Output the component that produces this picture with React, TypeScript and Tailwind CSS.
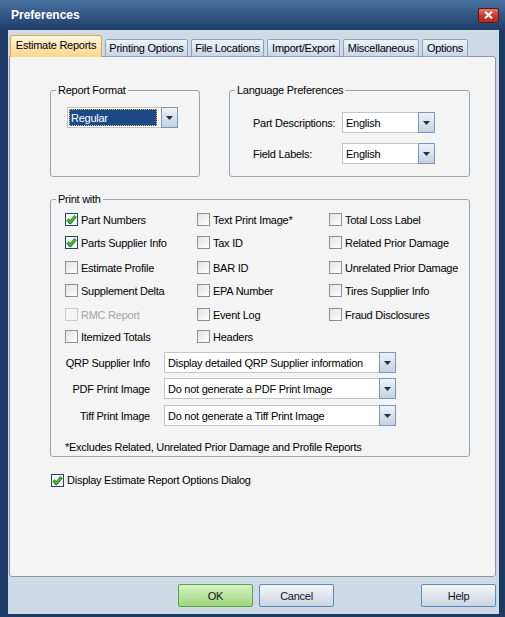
import clsx from 'clsx'

const tabs = [
  { label: 'Estimate Reports', w: 'w-[92px]', active: true },
  { label: 'Printing Options', w: 'w-[83px]' },
  { label: 'File Locations', w: 'w-[73px]' },
  { label: 'Import/Export', w: 'w-[73px]' },
  { label: 'Miscellaneous', w: 'w-[76px]' },
  { label: 'Options', w: 'w-[46px]' },
]

type Box = { label: string; checked?: boolean; disabled?: boolean } | null

// rows of the "Print with" grid, three columns each
const rows: { h: string; cells: Box[] }[] = [
  { h: 'h-[23px]', cells: [{ label: 'Part Numbers', checked: true }, { label: 'Text Print Image*' }, { label: 'Total Loss Label' }] },
  { h: 'h-[25px]', cells: [{ label: 'Parts Supplier Info', checked: true }, { label: 'Tax ID' }, { label: 'Related Prior Damage' }] },
  { h: 'h-[23px]', cells: [{ label: 'Estimate Profile' }, { label: 'BAR ID' }, { label: 'Unrelated Prior Damage' }] },
  { h: 'h-[24px]', cells: [{ label: 'Supplement Delta' }, { label: 'EPA Number' }, { label: 'Tires Supplier Info' }] },
  { h: 'h-[22px]', cells: [{ label: 'RMC Report', disabled: true }, { label: 'Event Log' }, { label: 'Fraud Disclosures' }] },
  { h: 'h-[13px]', cells: [{ label: 'Itemized Totals' }, { label: 'Headers' }, null] },
]

function CheckBox({ checked, disabled }: { checked?: boolean; disabled?: boolean }) {
  return (
    <span
      className={clsx(
        'w-[13px] h-[13px] border flex items-center justify-center shrink-0',
        disabled
          ? 'border-[#cacaca] bg-[#f4f4f4]'
          : checked
            ? 'border-[#1f4270] bg-white'
            : 'border-[#8e8f8f] bg-linear-to-br from-[#e2e2e2] to-white',
      )}
    >
      {checked && (
        <svg width="11" height="11" viewBox="0 0 11 11">
          <path d="M1.6 5.4 L4.3 8.6 L9.6 1.9" fill="none" stroke="#1f7a1c" strokeWidth="3.2" strokeLinejoin="round" />
          <path d="M1.9 5.5 L4.3 8.2 L9.3 2.1" fill="none" stroke="#47bd36" strokeWidth="1.7" strokeLinejoin="round" />
        </svg>
      )}
    </span>
  )
}

function Arrow() {
  return (
    <svg width="7" height="4" viewBox="0 0 7 4">
      <polygon points="0,0 7,0 3.5,4" fill="#17345f" />
    </svg>
  )
}

function Select({ value, w, focused }: { value: string; w: string; focused?: boolean }) {
  return (
    <div className={clsx('flex h-[21px] bg-white border border-[#c2c5ca] shrink-0', w)}>
      {focused ? (
        <div className="flex-1 flex items-center my-[1px] ml-[1px] mr-[4px] pl-[2px] bg-[#1c4a89] text-white outline-1 outline-dotted outline-[#e9c45a] -outline-offset-1">
          {value}
        </div>
      ) : (
        <div className="flex-1 flex items-center pl-[3px] whitespace-nowrap overflow-hidden">{value}</div>
      )}
      <div className="w-[17px] -my-px -mr-px border border-[#7b96bb] bg-linear-to-b from-[#eef2f7] to-[#c6d2df] flex items-center justify-center">
        <Arrow />
      </div>
    </div>
  )
}

function Button({ label, ok }: { label: string; ok?: boolean }) {
  return (
    <button
      className={clsx(
        'w-[75px] h-[23px] border rounded-[2px] text-[#141414] flex items-center justify-center',
        ok
          ? 'border-[#4ea845] bg-linear-to-b from-[#d7f1c3] to-[#9fd57c]'
          : 'border-[#5b88c2] bg-linear-to-b from-[#f4f6f9] to-[#cbd5e1]',
      )}
    >
      {label}
    </button>
  )
}

export default function App() {
  return (
    <div className="w-[505px] h-[617px] bg-[#1d3a64] flex flex-col overflow-hidden select-none text-black text-[11px] tracking-[-0.25px] leading-[14px] font-['Liberation_Sans',Arial,sans-serif]">
      {/* title bar */}
      <div className="h-[30px] shrink-0 bg-linear-to-b from-[#4a71a1] to-[#1f3d68] flex items-center pl-[11px] pr-[6px]">
        <span className="text-white font-bold text-[12px] tracking-normal">Preferences</span>
        <div className="ml-auto w-[21px] h-[15px] rounded-[2px] border border-[#5a1a14] bg-linear-to-b from-[#e2776c] via-[#c9392c] to-[#b22b1f] flex items-center justify-center">
          <svg width="9" height="8" viewBox="0 0 9 8">
            <path d="M1 0.8 L8 7.2 M8 0.8 L1 7.2" stroke="white" strokeWidth="2" />
          </svg>
        </div>
      </div>

      {/* client area */}
      <div className="flex-1 ml-[8px] mr-[6px] mb-[3px] bg-[#cfdae7] flex flex-col pt-[5px] pl-[1px] pr-[3px]">
        <div className="flex items-end gap-[3px] h-[22px] ml-[1px] -mb-px relative z-10 whitespace-nowrap">
          {tabs.map((t) =>
            t.active ? (
              <div
                key={t.label}
                className={clsx(
                  'h-[22px] border border-b-0 border-[#e5a73c] rounded-t-[3px] bg-linear-to-b from-[#fff6df] to-[#fcd488] flex items-center justify-center pb-[3px]',
                  t.w,
                )}
              >
                {t.label}
              </div>
            ) : (
              <div
                key={t.label}
                className={clsx(
                  'h-[18px] border border-[#8ea3bf] rounded-t-[2px] bg-linear-to-b from-[#eef3f9] to-[#c8d6e8] flex items-center justify-center',
                  t.w,
                )}
              >
                {t.label}
              </div>
            ),
          )}
        </div>

        {/* tab panel */}
        <div className="h-[521px] bg-[#f4f4f4] border border-[#8c98a8] rounded-b-[3px] rounded-tr-[3px] flex flex-col pt-[26px] pl-[40px]">
          <div className="flex">
            <fieldset className="w-[150px] h-[94px] border border-[#9ba3ae] rounded-[3px] pl-[16px]">
              <legend className="-ml-[11px] px-[2px]">Report Format</legend>
              <div className="mt-[10px]">
                <Select value="Regular" w="w-[111px]" focused />
              </div>
            </fieldset>
            <fieldset className="ml-[29px] w-[241px] h-[94px] border border-[#9ba3ae] rounded-[3px] pl-[23px]">
              <legend className="-ml-[18px] px-[2px]">Language Preferences</legend>
              <div className="mt-[15px] flex items-center whitespace-nowrap">
                <span className="w-[89px]">Part Descriptions:</span>
                <Select value="English" w="w-[93px]" />
              </div>
              <div className="mt-[10px] flex items-center whitespace-nowrap">
                <span className="w-[89px]">Field Labels:</span>
                <Select value="English" w="w-[93px]" />
              </div>
            </fieldset>
          </div>

          <fieldset className="mt-[15px] w-[420px] h-[265px] border border-[#9ba3ae] rounded-[3px]">
            <legend className="ml-[5px] px-[2px]">Print with</legend>
            <div className="mt-[7px] pl-[14px] flex flex-col">
              {rows.map((r, i) => (
                <div key={i} className={clsx('flex items-start', r.h)}>
                  {r.cells.map((c, j) => (
                    <div key={j} className="w-[132px] h-[13px] flex items-center gap-[3px] whitespace-nowrap">
                      {c && (
                        <>
                          <CheckBox checked={c.checked} disabled={c.disabled} />
                          <span className={c.disabled ? 'text-[#a5a5a5]' : ''}>{c.label}</span>
                        </>
                      )}
                    </div>
                  ))}
                </div>
              ))}
            </div>

            <div className="mt-[9px] flex items-center">
              <span className="w-[99px] text-right whitespace-nowrap">QRP Supplier Info</span>
              <div className="ml-[14px]">
                <Select value="Display detailed QRP Supplier information" w="w-[232px]" />
              </div>
            </div>
            <div className="mt-[5px] flex items-center">
              <span className="w-[99px] text-right whitespace-nowrap">PDF Print Image</span>
              <div className="ml-[14px]">
                <Select value="Do not generate a PDF Print Image" w="w-[232px]" />
              </div>
            </div>
            <div className="mt-[6px] flex items-center">
              <span className="w-[99px] text-right whitespace-nowrap">Tiff Print Image</span>
              <div className="ml-[14px]">
                <Select value="Do not generate a Tiff Print Image" w="w-[232px]" />
              </div>
            </div>
            <div className="mt-[14px] pl-[14px] whitespace-nowrap">
              *Excludes Related, Unrelated Prior Damage and Profile Reports
            </div>
          </fieldset>

          <div className="mt-[16px] ml-[1px] flex items-center gap-[3px]">
            <CheckBox checked />
            <span>Display Estimate Report Options Dialog</span>
          </div>
        </div>

        {/* buttons */}
        <div className="mt-[7px] flex pl-[169px]">
          <Button label="OK" ok />
          <div className="ml-[6px]">
            <Button label="Cancel" />
          </div>
          <div className="ml-auto">
            <Button label="Help" />
          </div>
        </div>
      </div>
    </div>
  )
}
